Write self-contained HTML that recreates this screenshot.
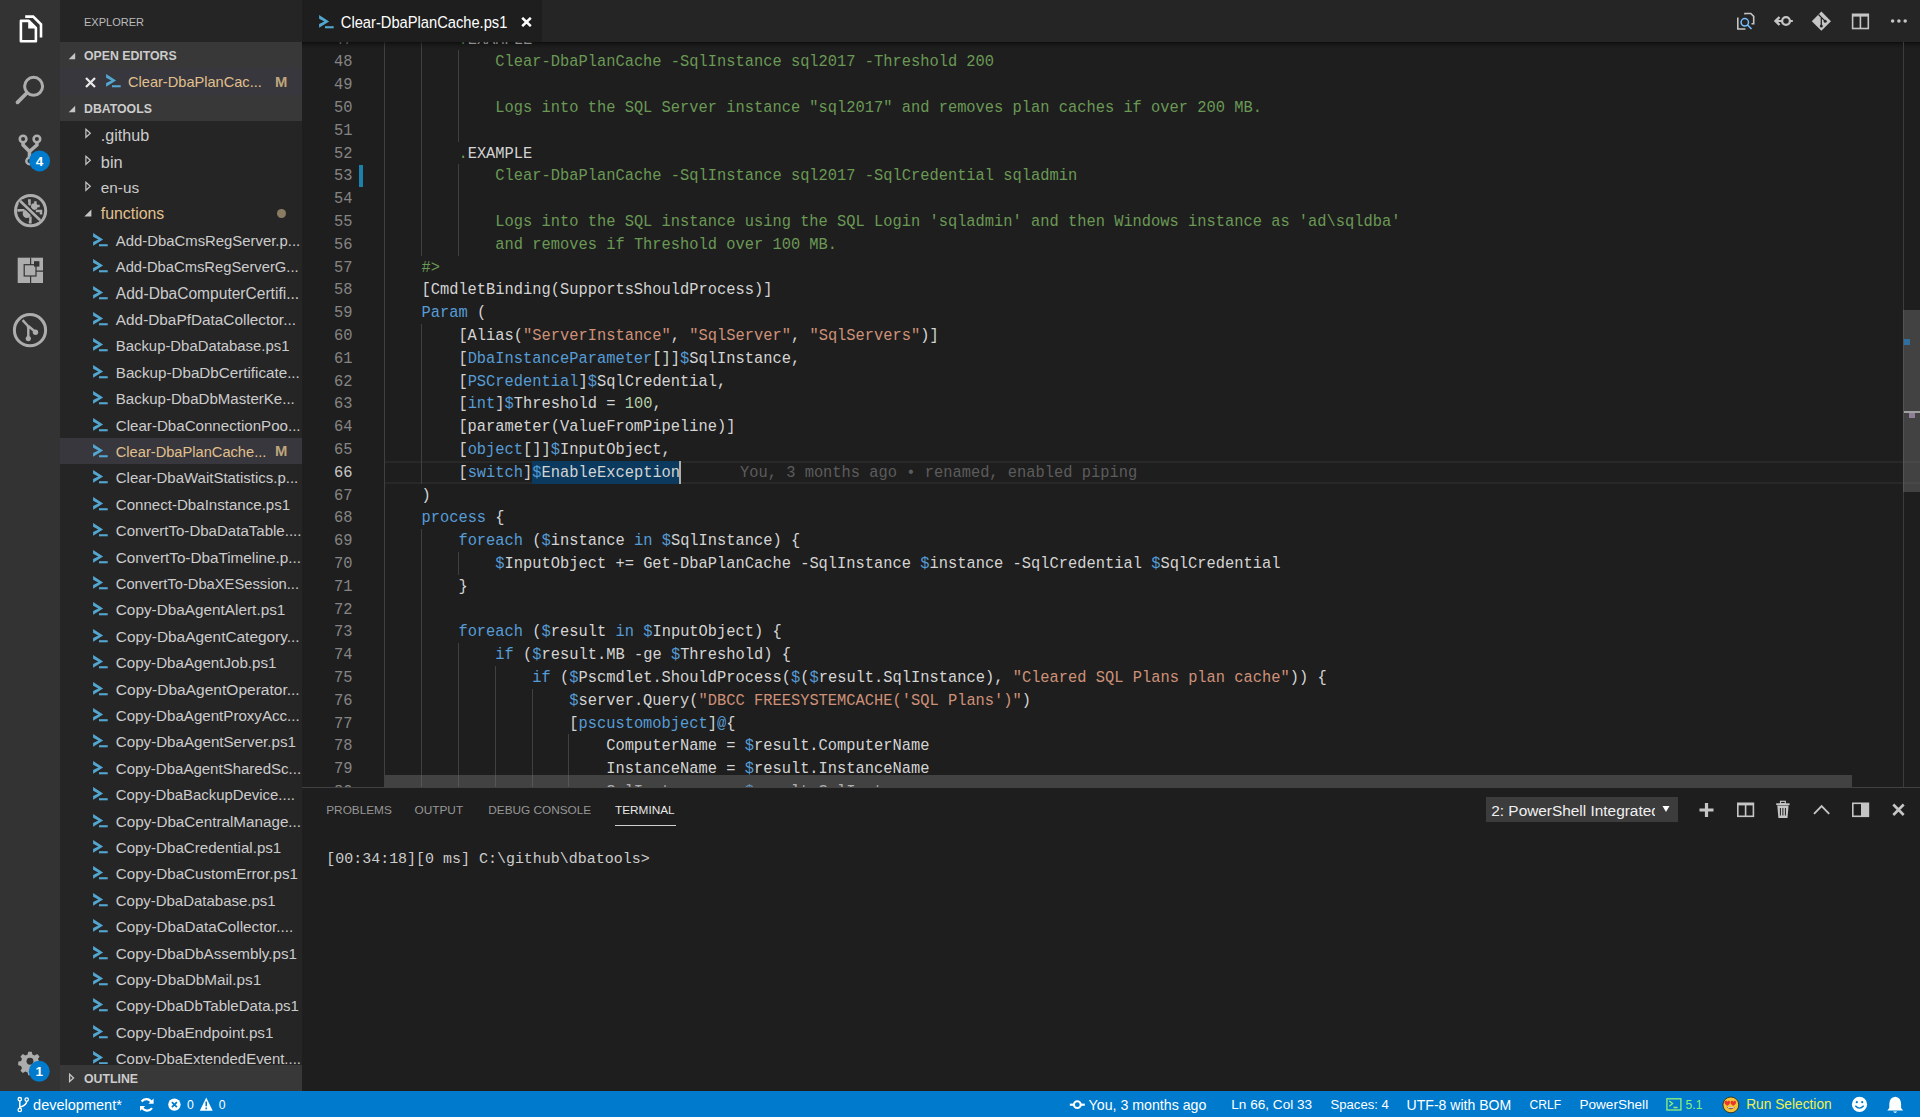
<!DOCTYPE html><html><head><meta charset="utf-8"><style>
*{margin:0;padding:0;box-sizing:border-box}
html,body{width:1920px;height:1117px;overflow:hidden;background:#1e1e1e;font-family:"Liberation Sans",sans-serif}
.abs{position:absolute}
#act{position:absolute;left:0;top:0;width:60px;height:1091px;background:#333333}
#side{position:absolute;left:60px;top:0;width:242px;height:1091px;background:#252526;overflow:hidden}
#tabs{position:absolute;left:302px;top:0;width:1618px;height:42px;background:#252526}
#editor{position:absolute;left:302px;top:42px;width:1618px;height:745px;background:#1e1e1e;overflow:hidden}
#panel{position:absolute;left:302px;top:787px;width:1618px;height:304px;background:#1e1e1e;border-top:1px solid #414141}
#status{position:absolute;left:0;top:1091px;width:1920px;height:26px;background:#007acc;color:#fff;font-size:13.8px}
.ln{position:absolute;left:82.50px;height:22.8px;line-height:22.8px;white-space:pre;font-family:"Liberation Mono",monospace;font-size:15.405px;color:#d4d4d4;transform:translateY(1px) scaleY(1.1)}
.lno{position:absolute;left:0;width:50.5px;text-align:right;height:22.8px;line-height:22.8px;font-family:"Liberation Mono",monospace;font-size:15.405px;color:#858585;transform:translateY(1px) scaleY(1.1)}
.lno.cur{color:#c6c6c6}
.ig{position:absolute;width:1.2px;height:23.3px;background:#404040}
.row{position:absolute;left:0;width:242px;height:26.4px}
.row.sel{background:#37373d}
.ft{position:absolute;top:0;line-height:26.4px;font-size:15.2px;color:#cccccc;white-space:nowrap;transform:translateY(1px)}
.ft.mod{color:#e2c08d}
.psi{position:absolute;left:33px;top:6px}
.chev{position:absolute;left:23.5px;top:7px}
.dot{position:absolute;left:216.5px;top:8.5px;width:9.5px;height:9.5px;border-radius:50%;background:#8c7b63}
.mbadge{position:absolute;left:215px;top:0.5px;line-height:26.4px;font-size:14.8px;font-weight:bold;color:#bfa57c}
.sh{position:absolute;left:0;width:242px;height:26.4px;background:#383838}
.sh span{position:absolute;left:24px;top:1px;line-height:26.4px;font-size:12.3px;font-weight:bold;color:#cccccc}
.sh svg{position:absolute;left:8px;top:9.8px}
</style></head><body>
<div id="act">
<svg class="abs" style="left:0;top:0" width="60" height="360" viewBox="0 0 60 360">
 <path d="M25.2 16.6 H33.2 L41 24.4 V37.5" fill="none" stroke="#fff" stroke-width="2.6"/>
 <path d="M20.9 20.9 H28.8 L35.9 28 V41.2 H20.9 Z" fill="none" stroke="#fff" stroke-width="2.6" stroke-linejoin="round"/>
 <path d="M28.2 21.5 V28.6 H35.3 Z" fill="#fff"/>
 <circle cx="33.6" cy="86.3" r="9" fill="none" stroke="#adadad" stroke-width="3"/>
 <path d="M26.8 93 L17.5 102.3" stroke="#adadad" stroke-width="3.8" stroke-linecap="round"/>
 <circle cx="23.1" cy="139.1" r="3.3" fill="none" stroke="#adadad" stroke-width="2.6"/>
 <circle cx="36.9" cy="139.1" r="3.3" fill="none" stroke="#adadad" stroke-width="2.6"/>
 <circle cx="29.5" cy="161" r="3.2" fill="none" stroke="#adadad" stroke-width="2.4"/>
 <path d="M23.1 142.3 V145 L29.5 151.5 V157.8 M36.9 142.3 V145 L29.5 151.5" fill="none" stroke="#adadad" stroke-width="3.6"/>
 <circle cx="39.6" cy="160.9" r="10.5" fill="#007acc"/>
 <text x="39.6" y="165.8" text-anchor="middle" font-family="Liberation Sans" font-size="13.5" font-weight="bold" fill="#fff">4</text>
 <circle cx="30.6" cy="210.7" r="15.1" fill="none" stroke="#adadad" stroke-width="3"/>
 <path d="M18.6 211.8 V210.3 H24.5 M30.4 216.5 V222.2 H28.8 M28 200.4 H29.5 V205.5 M35.4 201.2 V205.2 M36.5 205.9 H39.7 M35.8 211.1 H41 V214.6" fill="none" stroke="#adadad" stroke-width="2.5"/>
 <circle cx="26.9" cy="213.8" r="4.2" fill="#adadad"/>
 <circle cx="34.3" cy="206.6" r="3.3" fill="#adadad"/>
 <path d="M20.2 201 L40.2 220.3" stroke="#333" stroke-width="5.6"/>
 <path d="M20.2 201 L40.2 220.3" stroke="#adadad" stroke-width="2.6"/>
 <path d="M17.7 257.7 H43 V283 H17.7 Z" fill="#adadad"/>
 <path d="M30.6 257.7 V264.7 M30.6 276 V283 M36 271.2 H43" stroke="#333" stroke-width="1.2"/>
 <rect x="24.2" y="264.7" width="11.8" height="11.3" fill="none" stroke="#333" stroke-width="1.2"/>
 <rect x="34" y="261.2" width="5.4" height="5.4" fill="#333"/>
 <circle cx="30" cy="330.2" r="15.6" fill="none" stroke="#adadad" stroke-width="3"/>
 <path d="M22.6 320.1 L27.5 325.5 Q28.5 327 28.3 330 V338 M28.3 326 L35.5 332" fill="none" stroke="#adadad" stroke-width="2.4"/>
 <circle cx="28.3" cy="338.6" r="2.6" fill="#adadad"/>
 <circle cx="35.5" cy="332.3" r="2.7" fill="#adadad"/>
</svg>
<svg class="abs" style="left:0;top:1040px" width="60" height="51" viewBox="0 1040 60 51">
 <g transform="translate(30 1061.2) scale(0.86)">
  <path d="M-2 -11 h4 l0.8 3.3 l2.6 1.1 l2.9 -1.8 l2.8 2.8 l-1.8 2.9 l1.1 2.6 l3.3 0.8 v4 l-3.3 0.8 l-1.1 2.6 l1.8 2.9 l-2.8 2.8 l-2.9 -1.8 l-2.6 1.1 l-0.8 3.3 h-4 l-0.8 -3.3 l-2.6 -1.1 l-2.9 1.8 l-2.8 -2.8 l1.8 -2.9 l-1.1 -2.6 l-3.3 -0.8 v-4 l3.3 -0.8 l1.1 -2.6 l-1.8 -2.9 l2.8 -2.8 l2.9 1.8 l2.6 -1.1 Z" fill="#adadad"/>
  <circle r="4" fill="#333"/>
 </g>
 <circle cx="39.25" cy="1071.3" r="10.5" fill="#007acc"/>
 <text x="39.25" y="1076.2" text-anchor="middle" font-family="Liberation Sans" font-size="13.5" font-weight="bold" fill="#fff">1</text>
</svg>
</div>
<div id="side">
<div class="abs" style="left:24px;top:1px;line-height:42px;font-size:11px;color:#bbbbbb">EXPLORER</div>
<div class="sh" style="top:42px"><svg width="10" height="10" viewBox="0 0 10 10"><path d="M7.2 0.8 V7.3 H0.7 Z" fill="#c5c5c5"/></svg><span>OPEN EDITORS</span></div>
<div class="row sel" style="top:68.4px"><svg class="abs" style="left:25px;top:8.2px" width="11" height="11" viewBox="0 0 11 11"><path d="M1 1 L10 10 M10 1 L1 10" stroke="#e8e8e8" stroke-width="2.3"/></svg><svg class="psi" style="left:45.6px;top:6px" width="16" height="14" viewBox="0 0 16 14"><path d="M0.1 0.1 L10.1 6.5 L0.1 12.8 V9.1 L5.3 6.5 L0.1 3.8 Z" fill="#53a6d0"/><rect x="6" y="11.2" width="8.7" height="2.1" fill="#53a6d0"/></svg><span class="ft mod" style="left:68.00px;font-size:14.60px">Clear-DbaPlanCac...</span><span class="mbadge">M</span></div>
<div class="sh" style="top:94.8px"><svg width="10" height="10" viewBox="0 0 10 10"><path d="M7.2 0.8 V7.3 H0.7 Z" fill="#c5c5c5"/></svg><span>DBATOOLS</span></div>
<div class="abs" style="left:0;top:121.2px;width:242px;height:943px;overflow:hidden">
<div class="row" style="top:0.0px"><svg class="chev" width="10" height="12" viewBox="0 0 10 12"><path d="M1.9 1.3 L6.3 5.3 L1.9 9.3 Z" fill="none" stroke="#c5c5c5" stroke-width="1.2"/></svg><span class="ft" style="left:40.80px;font-size:16.10px">.github</span></div>
<div class="row" style="top:26.4px"><svg class="chev" width="10" height="12" viewBox="0 0 10 12"><path d="M1.9 1.3 L6.3 5.3 L1.9 9.3 Z" fill="none" stroke="#c5c5c5" stroke-width="1.2"/></svg><span class="ft" style="left:40.80px;font-size:16.39px">bin</span></div>
<div class="row" style="top:52.8px"><svg class="chev" width="10" height="12" viewBox="0 0 10 12"><path d="M1.9 1.3 L6.3 5.3 L1.9 9.3 Z" fill="none" stroke="#c5c5c5" stroke-width="1.2"/></svg><span class="ft" style="left:40.80px;font-size:15.32px">en-us</span></div>
<div class="row" style="top:79.2px"><svg class="chev" style="left:23.5px;top:8.6px" width="10" height="10" viewBox="0 0 10 10"><path d="M7.4 0.4 V7.5 H0.3 Z" fill="#c5c5c5"/></svg><span class="ft mod" style="left:40.80px;font-size:15.85px">functions</span><span class="dot"></span></div>
<div class="row" style="top:105.6px"><svg class="psi" width="16" height="14" viewBox="0 0 16 14"><path d="M0.1 0.1 L10.1 6.5 L0.1 12.8 V9.1 L5.3 6.5 L0.1 3.8 Z" fill="#53a6d0"/><rect x="6" y="11.2" width="8.7" height="2.1" fill="#53a6d0"/></svg><span class="ft" style="left:55.80px;font-size:14.89px">Add-DbaCmsRegServer.p...</span></div>
<div class="row" style="top:132.0px"><svg class="psi" width="16" height="14" viewBox="0 0 16 14"><path d="M0.1 0.1 L10.1 6.5 L0.1 12.8 V9.1 L5.3 6.5 L0.1 3.8 Z" fill="#53a6d0"/><rect x="6" y="11.2" width="8.7" height="2.1" fill="#53a6d0"/></svg><span class="ft" style="left:55.80px;font-size:14.75px">Add-DbaCmsRegServerG...</span></div>
<div class="row" style="top:158.4px"><svg class="psi" width="16" height="14" viewBox="0 0 16 14"><path d="M0.1 0.1 L10.1 6.5 L0.1 12.8 V9.1 L5.3 6.5 L0.1 3.8 Z" fill="#53a6d0"/><rect x="6" y="11.2" width="8.7" height="2.1" fill="#53a6d0"/></svg><span class="ft" style="left:55.80px;font-size:15.57px">Add-DbaComputerCertifi...</span></div>
<div class="row" style="top:184.8px"><svg class="psi" width="16" height="14" viewBox="0 0 16 14"><path d="M0.1 0.1 L10.1 6.5 L0.1 12.8 V9.1 L5.3 6.5 L0.1 3.8 Z" fill="#53a6d0"/><rect x="6" y="11.2" width="8.7" height="2.1" fill="#53a6d0"/></svg><span class="ft" style="left:55.80px;font-size:15.36px">Add-DbaPfDataCollector...</span></div>
<div class="row" style="top:211.2px"><svg class="psi" width="16" height="14" viewBox="0 0 16 14"><path d="M0.1 0.1 L10.1 6.5 L0.1 12.8 V9.1 L5.3 6.5 L0.1 3.8 Z" fill="#53a6d0"/><rect x="6" y="11.2" width="8.7" height="2.1" fill="#53a6d0"/></svg><span class="ft" style="left:55.80px;font-size:14.89px">Backup-DbaDatabase.ps1</span></div>
<div class="row" style="top:237.6px"><svg class="psi" width="16" height="14" viewBox="0 0 16 14"><path d="M0.1 0.1 L10.1 6.5 L0.1 12.8 V9.1 L5.3 6.5 L0.1 3.8 Z" fill="#53a6d0"/><rect x="6" y="11.2" width="8.7" height="2.1" fill="#53a6d0"/></svg><span class="ft" style="left:55.80px;font-size:15.19px">Backup-DbaDbCertificate...</span></div>
<div class="row" style="top:264.0px"><svg class="psi" width="16" height="14" viewBox="0 0 16 14"><path d="M0.1 0.1 L10.1 6.5 L0.1 12.8 V9.1 L5.3 6.5 L0.1 3.8 Z" fill="#53a6d0"/><rect x="6" y="11.2" width="8.7" height="2.1" fill="#53a6d0"/></svg><span class="ft" style="left:55.80px;font-size:15.06px">Backup-DbaDbMasterKe...</span></div>
<div class="row" style="top:290.4px"><svg class="psi" width="16" height="14" viewBox="0 0 16 14"><path d="M0.1 0.1 L10.1 6.5 L0.1 12.8 V9.1 L5.3 6.5 L0.1 3.8 Z" fill="#53a6d0"/><rect x="6" y="11.2" width="8.7" height="2.1" fill="#53a6d0"/></svg><span class="ft" style="left:55.80px;font-size:15.12px">Clear-DbaConnectionPoo...</span></div>
<div class="row sel" style="top:316.8px"><svg class="psi" width="16" height="14" viewBox="0 0 16 14"><path d="M0.1 0.1 L10.1 6.5 L0.1 12.8 V9.1 L5.3 6.5 L0.1 3.8 Z" fill="#53a6d0"/><rect x="6" y="11.2" width="8.7" height="2.1" fill="#53a6d0"/></svg><span class="ft mod" style="left:55.80px;font-size:14.65px">Clear-DbaPlanCache...</span><span class="mbadge">M</span></div>
<div class="row" style="top:343.2px"><svg class="psi" width="16" height="14" viewBox="0 0 16 14"><path d="M0.1 0.1 L10.1 6.5 L0.1 12.8 V9.1 L5.3 6.5 L0.1 3.8 Z" fill="#53a6d0"/><rect x="6" y="11.2" width="8.7" height="2.1" fill="#53a6d0"/></svg><span class="ft" style="left:55.80px;font-size:14.98px">Clear-DbaWaitStatistics.p...</span></div>
<div class="row" style="top:369.6px"><svg class="psi" width="16" height="14" viewBox="0 0 16 14"><path d="M0.1 0.1 L10.1 6.5 L0.1 12.8 V9.1 L5.3 6.5 L0.1 3.8 Z" fill="#53a6d0"/><rect x="6" y="11.2" width="8.7" height="2.1" fill="#53a6d0"/></svg><span class="ft" style="left:55.80px;font-size:15.08px">Connect-DbaInstance.ps1</span></div>
<div class="row" style="top:396.0px"><svg class="psi" width="16" height="14" viewBox="0 0 16 14"><path d="M0.1 0.1 L10.1 6.5 L0.1 12.8 V9.1 L5.3 6.5 L0.1 3.8 Z" fill="#53a6d0"/><rect x="6" y="11.2" width="8.7" height="2.1" fill="#53a6d0"/></svg><span class="ft" style="left:55.80px;font-size:15.05px">ConvertTo-DbaDataTable....</span></div>
<div class="row" style="top:422.4px"><svg class="psi" width="16" height="14" viewBox="0 0 16 14"><path d="M0.1 0.1 L10.1 6.5 L0.1 12.8 V9.1 L5.3 6.5 L0.1 3.8 Z" fill="#53a6d0"/><rect x="6" y="11.2" width="8.7" height="2.1" fill="#53a6d0"/></svg><span class="ft" style="left:55.80px;font-size:15.27px">ConvertTo-DbaTimeline.p...</span></div>
<div class="row" style="top:448.8px"><svg class="psi" width="16" height="14" viewBox="0 0 16 14"><path d="M0.1 0.1 L10.1 6.5 L0.1 12.8 V9.1 L5.3 6.5 L0.1 3.8 Z" fill="#53a6d0"/><rect x="6" y="11.2" width="8.7" height="2.1" fill="#53a6d0"/></svg><span class="ft" style="left:55.80px;font-size:14.72px">ConvertTo-DbaXESession...</span></div>
<div class="row" style="top:475.2px"><svg class="psi" width="16" height="14" viewBox="0 0 16 14"><path d="M0.1 0.1 L10.1 6.5 L0.1 12.8 V9.1 L5.3 6.5 L0.1 3.8 Z" fill="#53a6d0"/><rect x="6" y="11.2" width="8.7" height="2.1" fill="#53a6d0"/></svg><span class="ft" style="left:55.80px;font-size:15.33px">Copy-DbaAgentAlert.ps1</span></div>
<div class="row" style="top:501.6px"><svg class="psi" width="16" height="14" viewBox="0 0 16 14"><path d="M0.1 0.1 L10.1 6.5 L0.1 12.8 V9.1 L5.3 6.5 L0.1 3.8 Z" fill="#53a6d0"/><rect x="6" y="11.2" width="8.7" height="2.1" fill="#53a6d0"/></svg><span class="ft" style="left:55.80px;font-size:15.42px">Copy-DbaAgentCategory...</span></div>
<div class="row" style="top:528.0px"><svg class="psi" width="16" height="14" viewBox="0 0 16 14"><path d="M0.1 0.1 L10.1 6.5 L0.1 12.8 V9.1 L5.3 6.5 L0.1 3.8 Z" fill="#53a6d0"/><rect x="6" y="11.2" width="8.7" height="2.1" fill="#53a6d0"/></svg><span class="ft" style="left:55.80px;font-size:15.13px">Copy-DbaAgentJob.ps1</span></div>
<div class="row" style="top:554.4px"><svg class="psi" width="16" height="14" viewBox="0 0 16 14"><path d="M0.1 0.1 L10.1 6.5 L0.1 12.8 V9.1 L5.3 6.5 L0.1 3.8 Z" fill="#53a6d0"/><rect x="6" y="11.2" width="8.7" height="2.1" fill="#53a6d0"/></svg><span class="ft" style="left:55.80px;font-size:15.54px">Copy-DbaAgentOperator...</span></div>
<div class="row" style="top:580.8px"><svg class="psi" width="16" height="14" viewBox="0 0 16 14"><path d="M0.1 0.1 L10.1 6.5 L0.1 12.8 V9.1 L5.3 6.5 L0.1 3.8 Z" fill="#53a6d0"/><rect x="6" y="11.2" width="8.7" height="2.1" fill="#53a6d0"/></svg><span class="ft" style="left:55.80px;font-size:15.12px">Copy-DbaAgentProxyAcc...</span></div>
<div class="row" style="top:607.2px"><svg class="psi" width="16" height="14" viewBox="0 0 16 14"><path d="M0.1 0.1 L10.1 6.5 L0.1 12.8 V9.1 L5.3 6.5 L0.1 3.8 Z" fill="#53a6d0"/><rect x="6" y="11.2" width="8.7" height="2.1" fill="#53a6d0"/></svg><span class="ft" style="left:55.80px;font-size:15.15px">Copy-DbaAgentServer.ps1</span></div>
<div class="row" style="top:633.6px"><svg class="psi" width="16" height="14" viewBox="0 0 16 14"><path d="M0.1 0.1 L10.1 6.5 L0.1 12.8 V9.1 L5.3 6.5 L0.1 3.8 Z" fill="#53a6d0"/><rect x="6" y="11.2" width="8.7" height="2.1" fill="#53a6d0"/></svg><span class="ft" style="left:55.80px;font-size:15.02px">Copy-DbaAgentSharedSc...</span></div>
<div class="row" style="top:660.0px"><svg class="psi" width="16" height="14" viewBox="0 0 16 14"><path d="M0.1 0.1 L10.1 6.5 L0.1 12.8 V9.1 L5.3 6.5 L0.1 3.8 Z" fill="#53a6d0"/><rect x="6" y="11.2" width="8.7" height="2.1" fill="#53a6d0"/></svg><span class="ft" style="left:55.80px;font-size:14.93px">Copy-DbaBackupDevice....</span></div>
<div class="row" style="top:686.4px"><svg class="psi" width="16" height="14" viewBox="0 0 16 14"><path d="M0.1 0.1 L10.1 6.5 L0.1 12.8 V9.1 L5.3 6.5 L0.1 3.8 Z" fill="#53a6d0"/><rect x="6" y="11.2" width="8.7" height="2.1" fill="#53a6d0"/></svg><span class="ft" style="left:55.80px;font-size:15.23px">Copy-DbaCentralManage...</span></div>
<div class="row" style="top:712.8px"><svg class="psi" width="16" height="14" viewBox="0 0 16 14"><path d="M0.1 0.1 L10.1 6.5 L0.1 12.8 V9.1 L5.3 6.5 L0.1 3.8 Z" fill="#53a6d0"/><rect x="6" y="11.2" width="8.7" height="2.1" fill="#53a6d0"/></svg><span class="ft" style="left:55.80px;font-size:15.11px">Copy-DbaCredential.ps1</span></div>
<div class="row" style="top:739.2px"><svg class="psi" width="16" height="14" viewBox="0 0 16 14"><path d="M0.1 0.1 L10.1 6.5 L0.1 12.8 V9.1 L5.3 6.5 L0.1 3.8 Z" fill="#53a6d0"/><rect x="6" y="11.2" width="8.7" height="2.1" fill="#53a6d0"/></svg><span class="ft" style="left:55.80px;font-size:15.18px">Copy-DbaCustomError.ps1</span></div>
<div class="row" style="top:765.6px"><svg class="psi" width="16" height="14" viewBox="0 0 16 14"><path d="M0.1 0.1 L10.1 6.5 L0.1 12.8 V9.1 L5.3 6.5 L0.1 3.8 Z" fill="#53a6d0"/><rect x="6" y="11.2" width="8.7" height="2.1" fill="#53a6d0"/></svg><span class="ft" style="left:55.80px;font-size:14.98px">Copy-DbaDatabase.ps1</span></div>
<div class="row" style="top:792.0px"><svg class="psi" width="16" height="14" viewBox="0 0 16 14"><path d="M0.1 0.1 L10.1 6.5 L0.1 12.8 V9.1 L5.3 6.5 L0.1 3.8 Z" fill="#53a6d0"/><rect x="6" y="11.2" width="8.7" height="2.1" fill="#53a6d0"/></svg><span class="ft" style="left:55.80px;font-size:15.28px">Copy-DbaDataCollector....</span></div>
<div class="row" style="top:818.4px"><svg class="psi" width="16" height="14" viewBox="0 0 16 14"><path d="M0.1 0.1 L10.1 6.5 L0.1 12.8 V9.1 L5.3 6.5 L0.1 3.8 Z" fill="#53a6d0"/><rect x="6" y="11.2" width="8.7" height="2.1" fill="#53a6d0"/></svg><span class="ft" style="left:55.80px;font-size:15.20px">Copy-DbaDbAssembly.ps1</span></div>
<div class="row" style="top:844.8px"><svg class="psi" width="16" height="14" viewBox="0 0 16 14"><path d="M0.1 0.1 L10.1 6.5 L0.1 12.8 V9.1 L5.3 6.5 L0.1 3.8 Z" fill="#53a6d0"/><rect x="6" y="11.2" width="8.7" height="2.1" fill="#53a6d0"/></svg><span class="ft" style="left:55.80px;font-size:15.31px">Copy-DbaDbMail.ps1</span></div>
<div class="row" style="top:871.2px"><svg class="psi" width="16" height="14" viewBox="0 0 16 14"><path d="M0.1 0.1 L10.1 6.5 L0.1 12.8 V9.1 L5.3 6.5 L0.1 3.8 Z" fill="#53a6d0"/><rect x="6" y="11.2" width="8.7" height="2.1" fill="#53a6d0"/></svg><span class="ft" style="left:55.80px;font-size:15.05px">Copy-DbaDbTableData.ps1</span></div>
<div class="row" style="top:897.6px"><svg class="psi" width="16" height="14" viewBox="0 0 16 14"><path d="M0.1 0.1 L10.1 6.5 L0.1 12.8 V9.1 L5.3 6.5 L0.1 3.8 Z" fill="#53a6d0"/><rect x="6" y="11.2" width="8.7" height="2.1" fill="#53a6d0"/></svg><span class="ft" style="left:55.80px;font-size:15.25px">Copy-DbaEndpoint.ps1</span></div>
<div class="row" style="top:924.0px"><svg class="psi" width="16" height="14" viewBox="0 0 16 14"><path d="M0.1 0.1 L10.1 6.5 L0.1 12.8 V9.1 L5.3 6.5 L0.1 3.8 Z" fill="#53a6d0"/><rect x="6" y="11.2" width="8.7" height="2.1" fill="#53a6d0"/></svg><span class="ft" style="left:55.80px;font-size:14.94px">Copy-DbaExtendedEvent....</span></div>
</div>
<div class="sh" style="top:1064.6px"><svg style="left:7.5px;top:8.5px" width="10" height="12" viewBox="0 0 10 12"><path d="M1.6 1.2 L5.6 4.9 L1.6 8.6 Z" fill="none" stroke="#c5c5c5" stroke-width="1.3"/></svg><span>OUTLINE</span></div>
</div>
<div id="tabs"><div class="abs" style="left:0;top:0;width:240px;height:42px;background:#1e1e1e"></div>
<div class="abs" style="left:17px;top:15.2px"><svg  width="16" height="14" viewBox="0 0 16 14"><path d="M0.1 0.1 L10.1 6.5 L0.1 12.8 V9.1 L5.3 6.5 L0.1 3.8 Z" fill="#53a6d0"/><rect x="6" y="11.2" width="8.7" height="2.1" fill="#53a6d0"/></svg></div>
<div class="abs" style="left:38.8px;top:1.6px;line-height:42px;font-size:14.7px;color:#ffffff;white-space:nowrap;transform:scaleY(1.08)">Clear-DbaPlanCache.ps1</div>
<svg class="abs" style="left:218.5px;top:17px" width="11" height="10" viewBox="0 0 11 10"><path d="M1.2 0.8 L9.8 9.2 M9.8 0.8 L1.2 9.2" stroke="#fff" stroke-width="2.5"/></svg>
</div>

<svg class="abs" style="left:1720px;top:0" width="200" height="42" viewBox="1720 0 200 42">
 <path d="M1737.8 17.5 V29 H1745.5" fill="none" stroke="#c5c5c5" stroke-width="1.6"/>
 <path d="M1745 14.5 V13.5 H1750.8 L1753.7 16.4 V23.8 H1751.5" fill="none" stroke="#c5c5c5" stroke-width="1.6"/>
 <circle cx="1744.8" cy="22.3" r="3.7" fill="none" stroke="#75beff" stroke-width="1.5"/>
 <path d="M1747.5 25 L1751.5 29" stroke="#75beff" stroke-width="1.6"/>
 <path d="M1779.5 17 L1775.5 21 L1779.5 25" fill="none" stroke="#c5c5c5" stroke-width="2.4"/>
 <path d="M1776 21 H1792.8" stroke="#c5c5c5" stroke-width="2"/>
 <circle cx="1786" cy="21" r="3.9" fill="#252526" stroke="#c5c5c5" stroke-width="2.3"/>
 <path d="M1821.4 11.6 L1831 21.2 L1821.4 30.8 L1811.8 21.2 Z" fill="#c5c5c5"/>
 <path d="M1818.5 14.5 L1821.3 17.4 V25.8 M1821.3 17.4 L1825 21" fill="none" stroke="#252526" stroke-width="1.3"/>
 <circle cx="1821.3" cy="26" r="1.5" fill="#252526"/><circle cx="1825.2" cy="21.3" r="1.5" fill="#252526"/>
 <rect x="1852.6" y="14.3" width="15.7" height="14.2" fill="none" stroke="#c5c5c5" stroke-width="1.6"/>
 <rect x="1852.6" y="14" width="15.7" height="2.6" fill="#c5c5c5"/>
 <path d="M1860.4 16 V28.5" stroke="#c5c5c5" stroke-width="1.6"/>
 <circle cx="1892.6" cy="21" r="1.75" fill="#c5c5c5"/><circle cx="1898.9" cy="21" r="1.75" fill="#c5c5c5"/><circle cx="1905.2" cy="21" r="1.75" fill="#c5c5c5"/>
</svg>

<div id="editor">
<div class="abs" style="left:83px;top:418.80px;width:1535px;height:22.8px;border-top:2px solid #282828;border-bottom:2px solid #282828"></div>
<div class="abs" style="left:230.39px;top:418.80px;width:147.89px;height:22.8px;background:#0b3a5e"></div>
<div class="lno" style="top:-14.40px">47</div>
<div class="lno" style="top:8.40px">48</div>
<div class="lno" style="top:31.20px">49</div>
<div class="lno" style="top:54.00px">50</div>
<div class="lno" style="top:76.80px">51</div>
<div class="lno" style="top:99.60px">52</div>
<div class="lno" style="top:122.40px">53</div>
<div class="lno" style="top:145.20px">54</div>
<div class="lno" style="top:168.00px">55</div>
<div class="lno" style="top:190.80px">56</div>
<div class="lno" style="top:213.60px">57</div>
<div class="lno" style="top:236.40px">58</div>
<div class="lno" style="top:259.20px">59</div>
<div class="lno" style="top:282.00px">60</div>
<div class="lno" style="top:304.80px">61</div>
<div class="lno" style="top:327.60px">62</div>
<div class="lno" style="top:350.40px">63</div>
<div class="lno" style="top:373.20px">64</div>
<div class="lno" style="top:396.00px">65</div>
<div class="lno cur" style="top:418.80px">66</div>
<div class="lno" style="top:441.60px">67</div>
<div class="lno" style="top:464.40px">68</div>
<div class="lno" style="top:487.20px">69</div>
<div class="lno" style="top:510.00px">70</div>
<div class="lno" style="top:532.80px">71</div>
<div class="lno" style="top:555.60px">72</div>
<div class="lno" style="top:578.40px">73</div>
<div class="lno" style="top:601.20px">74</div>
<div class="lno" style="top:624.00px">75</div>
<div class="lno" style="top:646.80px">76</div>
<div class="lno" style="top:669.60px">77</div>
<div class="lno" style="top:692.40px">78</div>
<div class="lno" style="top:715.20px">79</div>
<div class="lno" style="top:738.00px">80</div>
<div class="abs" style="left:57px;top:122.90px;width:4px;height:22.30px;background:#1b81a8"></div>
<div class="ig" style="left:82.00px;top:-14.40px"></div>
<div class="ig" style="left:119.00px;top:-14.40px"></div>
<div class="ig" style="left:82.00px;top:8.40px"></div>
<div class="ig" style="left:119.00px;top:8.40px"></div>
<div class="ig" style="left:156.00px;top:8.40px"></div>
<div class="ig" style="left:82.00px;top:31.20px"></div>
<div class="ig" style="left:119.00px;top:31.20px"></div>
<div class="ig" style="left:156.00px;top:31.20px"></div>
<div class="ig" style="left:82.00px;top:54.00px"></div>
<div class="ig" style="left:119.00px;top:54.00px"></div>
<div class="ig" style="left:156.00px;top:54.00px"></div>
<div class="ig" style="left:82.00px;top:76.80px"></div>
<div class="ig" style="left:119.00px;top:76.80px"></div>
<div class="ig" style="left:156.00px;top:76.80px"></div>
<div class="ig" style="left:82.00px;top:99.60px"></div>
<div class="ig" style="left:119.00px;top:99.60px"></div>
<div class="ig" style="left:82.00px;top:122.40px"></div>
<div class="ig" style="left:119.00px;top:122.40px"></div>
<div class="ig" style="left:156.00px;top:122.40px"></div>
<div class="ig" style="left:82.00px;top:145.20px"></div>
<div class="ig" style="left:119.00px;top:145.20px"></div>
<div class="ig" style="left:156.00px;top:145.20px"></div>
<div class="ig" style="left:82.00px;top:168.00px"></div>
<div class="ig" style="left:119.00px;top:168.00px"></div>
<div class="ig" style="left:156.00px;top:168.00px"></div>
<div class="ig" style="left:82.00px;top:190.80px"></div>
<div class="ig" style="left:119.00px;top:190.80px"></div>
<div class="ig" style="left:156.00px;top:190.80px"></div>
<div class="ig" style="left:82.00px;top:213.60px"></div>
<div class="ig" style="left:82.00px;top:236.40px"></div>
<div class="ig" style="left:82.00px;top:259.20px"></div>
<div class="ig" style="left:82.00px;top:282.00px"></div>
<div class="ig" style="left:119.00px;top:282.00px"></div>
<div class="ig" style="left:82.00px;top:304.80px"></div>
<div class="ig" style="left:119.00px;top:304.80px"></div>
<div class="ig" style="left:82.00px;top:327.60px"></div>
<div class="ig" style="left:119.00px;top:327.60px"></div>
<div class="ig" style="left:82.00px;top:350.40px"></div>
<div class="ig" style="left:119.00px;top:350.40px"></div>
<div class="ig" style="left:82.00px;top:373.20px"></div>
<div class="ig" style="left:119.00px;top:373.20px"></div>
<div class="ig" style="left:82.00px;top:396.00px"></div>
<div class="ig" style="left:119.00px;top:396.00px"></div>
<div class="ig" style="left:82.00px;top:418.80px"></div>
<div class="ig" style="left:119.00px;top:418.80px"></div>
<div class="ig" style="left:82.00px;top:441.60px"></div>
<div class="ig" style="left:82.00px;top:464.40px"></div>
<div class="ig" style="left:82.00px;top:487.20px"></div>
<div class="ig" style="left:119.00px;top:487.20px"></div>
<div class="ig" style="left:82.00px;top:510.00px"></div>
<div class="ig" style="left:119.00px;top:510.00px"></div>
<div class="ig" style="left:156.00px;top:510.00px"></div>
<div class="ig" style="left:82.00px;top:532.80px"></div>
<div class="ig" style="left:119.00px;top:532.80px"></div>
<div class="ig" style="left:82.00px;top:555.60px"></div>
<div class="ig" style="left:119.00px;top:555.60px"></div>
<div class="ig" style="left:82.00px;top:578.40px"></div>
<div class="ig" style="left:119.00px;top:578.40px"></div>
<div class="ig" style="left:82.00px;top:601.20px"></div>
<div class="ig" style="left:119.00px;top:601.20px"></div>
<div class="ig" style="left:156.00px;top:601.20px"></div>
<div class="ig" style="left:82.00px;top:624.00px"></div>
<div class="ig" style="left:119.00px;top:624.00px"></div>
<div class="ig" style="left:156.00px;top:624.00px"></div>
<div class="ig" style="left:193.00px;top:624.00px"></div>
<div class="ig" style="left:82.00px;top:646.80px"></div>
<div class="ig" style="left:119.00px;top:646.80px"></div>
<div class="ig" style="left:156.00px;top:646.80px"></div>
<div class="ig" style="left:193.00px;top:646.80px"></div>
<div class="ig" style="left:230.00px;top:646.80px"></div>
<div class="ig" style="left:82.00px;top:669.60px"></div>
<div class="ig" style="left:119.00px;top:669.60px"></div>
<div class="ig" style="left:156.00px;top:669.60px"></div>
<div class="ig" style="left:193.00px;top:669.60px"></div>
<div class="ig" style="left:230.00px;top:669.60px"></div>
<div class="ig" style="left:82.00px;top:692.40px"></div>
<div class="ig" style="left:119.00px;top:692.40px"></div>
<div class="ig" style="left:156.00px;top:692.40px"></div>
<div class="ig" style="left:193.00px;top:692.40px"></div>
<div class="ig" style="left:230.00px;top:692.40px"></div>
<div class="ig" style="left:266.00px;top:692.40px"></div>
<div class="ig" style="left:82.00px;top:715.20px"></div>
<div class="ig" style="left:119.00px;top:715.20px"></div>
<div class="ig" style="left:156.00px;top:715.20px"></div>
<div class="ig" style="left:193.00px;top:715.20px"></div>
<div class="ig" style="left:230.00px;top:715.20px"></div>
<div class="ig" style="left:266.00px;top:715.20px"></div>
<div class="ig" style="left:82.00px;top:738.00px"></div>
<div class="ig" style="left:119.00px;top:738.00px"></div>
<div class="ig" style="left:156.00px;top:738.00px"></div>
<div class="ig" style="left:193.00px;top:738.00px"></div>
<div class="ig" style="left:230.00px;top:738.00px"></div>
<div class="ig" style="left:266.00px;top:738.00px"></div>
<div class="ln" style="top:-14.40px">        <span style="color:#6a9955">.</span>EXAMPLE</div>
<div class="ln" style="top:8.40px">            <span style="color:#6a9955">Clear-DbaPlanCache -SqlInstance sql2017 -Threshold 200</span></div>
<div class="ln" style="top:31.20px"></div>
<div class="ln" style="top:54.00px">            <span style="color:#6a9955">Logs into the SQL Server instance "sql2017" and removes plan caches if over 200 MB.</span></div>
<div class="ln" style="top:76.80px"></div>
<div class="ln" style="top:99.60px">        <span style="color:#6a9955">.</span>EXAMPLE</div>
<div class="ln" style="top:122.40px">            <span style="color:#6a9955">Clear-DbaPlanCache -SqlInstance sql2017 -SqlCredential sqladmin</span></div>
<div class="ln" style="top:145.20px"></div>
<div class="ln" style="top:168.00px">            <span style="color:#6a9955">Logs into the SQL instance using the SQL Login 'sqladmin' and then Windows instance as 'ad\sqldba'</span></div>
<div class="ln" style="top:190.80px">            <span style="color:#6a9955">and removes if Threshold over 100 MB.</span></div>
<div class="ln" style="top:213.60px">    <span style="color:#6a9955">#&gt;</span></div>
<div class="ln" style="top:236.40px">    [CmdletBinding(SupportsShouldProcess)]</div>
<div class="ln" style="top:259.20px">    <span style="color:#569cd6">Param</span> (</div>
<div class="ln" style="top:282.00px">        [Alias(<span style="color:#ce9178">"ServerInstance"</span>, <span style="color:#ce9178">"SqlServer"</span>, <span style="color:#ce9178">"SqlServers"</span>)]</div>
<div class="ln" style="top:304.80px">        [<span style="color:#569cd6">DbaInstanceParameter</span>[]]<span style="color:#569cd6">$</span>SqlInstance,</div>
<div class="ln" style="top:327.60px">        [<span style="color:#569cd6">PSCredential</span>]<span style="color:#569cd6">$</span>SqlCredential,</div>
<div class="ln" style="top:350.40px">        [<span style="color:#569cd6">int</span>]<span style="color:#569cd6">$</span>Threshold = <span style="color:#b5cea8">100</span>,</div>
<div class="ln" style="top:373.20px">        [parameter(ValueFromPipeline)]</div>
<div class="ln" style="top:396.00px">        [<span style="color:#569cd6">object</span>[]]<span style="color:#569cd6">$</span>InputObject,</div>
<div class="ln" style="top:418.80px">        [<span style="color:#569cd6">switch</span>]<span style="color:#569cd6">$</span>EnableException</div>
<div class="ln" style="top:441.60px">    )</div>
<div class="ln" style="top:464.40px">    <span style="color:#569cd6">process</span> {</div>
<div class="ln" style="top:487.20px">        <span style="color:#569cd6">foreach</span> (<span style="color:#569cd6">$</span>instance <span style="color:#569cd6">in</span> <span style="color:#569cd6">$</span>SqlInstance) {</div>
<div class="ln" style="top:510.00px">            <span style="color:#569cd6">$</span>InputObject += Get-DbaPlanCache -SqlInstance <span style="color:#569cd6">$</span>instance -SqlCredential <span style="color:#569cd6">$</span>SqlCredential</div>
<div class="ln" style="top:532.80px">        }</div>
<div class="ln" style="top:555.60px"></div>
<div class="ln" style="top:578.40px">        <span style="color:#569cd6">foreach</span> (<span style="color:#569cd6">$</span>result <span style="color:#569cd6">in</span> <span style="color:#569cd6">$</span>InputObject) {</div>
<div class="ln" style="top:601.20px">            <span style="color:#569cd6">if</span> (<span style="color:#569cd6">$</span>result.MB -ge <span style="color:#569cd6">$</span>Threshold) {</div>
<div class="ln" style="top:624.00px">                <span style="color:#569cd6">if</span> (<span style="color:#569cd6">$</span>Pscmdlet.ShouldProcess(<span style="color:#569cd6">$</span>(<span style="color:#569cd6">$</span>result.SqlInstance), <span style="color:#ce9178">"Cleared SQL Plans plan cache"</span>)) {</div>
<div class="ln" style="top:646.80px">                    <span style="color:#569cd6">$</span>server.Query(<span style="color:#ce9178">"DBCC FREESYSTEMCACHE('SQL Plans')"</span>)</div>
<div class="ln" style="top:669.60px">                    [<span style="color:#569cd6">pscustomobject</span>]<span style="color:#569cd6">@</span>{</div>
<div class="ln" style="top:692.40px">                        ComputerName = <span style="color:#569cd6">$</span>result.ComputerName</div>
<div class="ln" style="top:715.20px">                        InstanceName = <span style="color:#569cd6">$</span>result.InstanceName</div>
<div class="ln" style="top:738.00px">                        SqlInstance  = <span style="color:#569cd6">$</span>result.SqlInstance</div>
<div class="abs" style="left:377.08px;top:418.80px;width:2px;height:22.8px;background:#aeafad"></div>
<div class="ln" style="left:438px;top:418.80px;color:#5c5c5c">You, 3 months ago • renamed, enabled piping</div>
<div class="abs" style="left:0;top:0;width:1618px;height:6px;box-shadow:inset 0 6px 6px -6px #000"></div>
<div class="abs" style="left:83px;top:733.1px;width:1467px;height:12px;background:rgba(121,121,121,0.4)"></div>
<div class="abs" style="left:1601px;top:0;width:1.2px;height:746px;background:#3c3c3c"></div>
<div class="abs" style="left:1601px;top:268px;width:17px;height:181.8px;background:rgba(121,121,121,0.4)"></div>
<div class="abs" style="left:1602px;top:369px;width:16px;height:1.5px;background:#a0a0a0"></div>
<div class="abs" style="left:1607px;top:371px;width:6px;height:5px;background:#8e7e98"></div>
<div class="abs" style="left:1602px;top:297px;width:5.6px;height:6px;background:#2f6f9f"></div>
</div>
<div id="panel">
<div class="abs" style="left:24.25px;top:1px;line-height:42px;font-size:11.8px;color:#979797;white-space:nowrap">PROBLEMS</div>
<div class="abs" style="left:112.60px;top:1px;line-height:42px;font-size:11.8px;color:#979797;white-space:nowrap">OUTPUT</div>
<div class="abs" style="left:186.30px;top:1px;line-height:42px;font-size:11.8px;color:#979797;white-space:nowrap">DEBUG CONSOLE</div>
<div class="abs" style="left:313.00px;top:1px;line-height:42px;font-size:11.8px;color:#e7e7e7;white-space:nowrap">TERMINAL</div>
<div class="abs" style="left:313px;top:36.6px;width:61px;height:1px;background:#d0d0d0"></div>
<div class="abs" style="left:24.25px;top:59.5px;line-height:22px;font-family:'Liberation Mono',monospace;font-size:14.98px;color:#cccccc;white-space:pre">[00:34:18][0 ms] C:\github\dbatools&gt;</div>
<div class="abs" style="left:1184px;top:9px;width:191.5px;height:24.75px;background:#3c3c3c;overflow:hidden"><span class="abs" style="left:5.25px;top:1.5px;line-height:24.75px;font-size:15.4px;color:#f0f0f0;white-space:nowrap;width:164px;overflow:hidden">2: PowerShell Integrated</span><svg class="abs" style="left:176px;top:8px" width="8" height="8" viewBox="0 0 8 8"><path d="M0.5 1 H7.5 L4 7 Z" fill="#fff"/></svg></div>
</div>

<svg class="abs" style="left:1480px;top:788px" width="440" height="40" viewBox="1480 788 440 40">
 <path d="M1706.5 803 V817 M1699.5 810 H1713.5" stroke="#c5c5c5" stroke-width="3.2"/>
 <rect x="1737.8" y="803.3" width="15.6" height="13" fill="none" stroke="#c5c5c5" stroke-width="1.6"/>
 <rect x="1737.8" y="803" width="15.6" height="2.4" fill="#c5c5c5"/>
 <path d="M1745.6 804 V816" stroke="#c5c5c5" stroke-width="1.6"/>
 <path d="M1777.3 805.5 H1788.6 L1787.5 818 H1778.4 Z" fill="#c5c5c5"/>
 <rect x="1776.2" y="803.3" width="13.4" height="1.8" fill="#c5c5c5"/>
 <rect x="1780.5" y="801.3" width="4.8" height="2.4" fill="none" stroke="#c5c5c5" stroke-width="1.2"/>
 <path d="M1780.4 808 V815.5 M1782.9 808 V815.5 M1785.4 808 V815.5" stroke="#1e1e1e" stroke-width="1"/>
 <path d="M1814 813.8 L1821.6 806 L1829.2 813.8" fill="none" stroke="#c5c5c5" stroke-width="1.9"/>
 <rect x="1852.8" y="803.3" width="15.6" height="13" fill="none" stroke="#c5c5c5" stroke-width="1.6"/>
 <rect x="1861" y="803.3" width="7.4" height="13" fill="#c5c5c5"/>
 <path d="M1893.3 804.5 L1903.7 815 M1903.7 804.5 L1893.3 815" stroke="#c5c5c5" stroke-width="2.6"/>
</svg>

<div id="status"></div>

<svg class="abs" style="left:0;top:1091px" width="1920" height="26" viewBox="0 1091 1920 26">
 <circle cx="19.8" cy="1099.2" r="1.7" fill="none" stroke="#fff" stroke-width="1.3"/>
 <circle cx="19.8" cy="1109.9" r="1.7" fill="none" stroke="#fff" stroke-width="1.3"/>
 <circle cx="26.7" cy="1099.6" r="1.7" fill="none" stroke="#fff" stroke-width="1.3"/>
 <path d="M19.8 1101 V1108.2 M26.7 1101.3 Q26.7 1105 20.5 1107" fill="none" stroke="#fff" stroke-width="1.5"/>
 <path d="M151.5 1102 A6 6 0 0 0 141.6 1101.5 M142 1107.5 A6 6 0 0 0 152 1108.2" fill="none" stroke="#fff" stroke-width="2.2"/>
 <path d="M153.6 1098.6 V1103.8 H148.4 Z M140 1111.1 V1105.9 H145.2 Z" fill="#fff"/>
 <circle cx="174.4" cy="1104.6" r="6.2" fill="#fff"/>
 <path d="M171.9 1102.1 L176.9 1107.1 M176.9 1102.1 L171.9 1107.1" stroke="#007acc" stroke-width="1.7"/>
 <path d="M206.25 1097.5 L212.7 1110.8 H199.8 Z" fill="#fff"/>
 <path d="M206.25 1101.5 V1106.3 M206.25 1107.6 V1109.3" stroke="#007acc" stroke-width="1.6"/>
 <path d="M1069.8 1104.7 H1084.8" stroke="#fff" stroke-width="2.2"/>
 <circle cx="1077.3" cy="1104.7" r="3.4" fill="#007acc" stroke="#fff" stroke-width="2"/>
 <rect x="1666.9" y="1098.8" width="14" height="11.2" fill="none" stroke="#8df27c" stroke-width="1.3"/>
 <path d="M1669.3 1101 L1672.6 1103.6 L1669.3 1106.2 M1673.5 1107.5 H1677.5" fill="none" stroke="#8df27c" stroke-width="1.3"/>
 <circle cx="1730.85" cy="1104.9" r="7.9" fill="#f5c33b" stroke="#3a2a10" stroke-width="0.9"/>
 <path d="M1725.5 1102.5 c0-2 2.5-2.5 2.8-0.4 c0.3-2.1 2.8-1.6 2.8 0.4 c0 1.5-2.8 3.3-2.8 3.3 c0 0-2.8-1.8-2.8-3.3Z" fill="#e8372d" transform="translate(-1 0)"/>
 <path d="M1731.5 1102.5 c0-2 2.5-2.5 2.8-0.4 c0.3-2.1 2.8-1.6 2.8 0.4 c0 1.5-2.8 3.3-2.8 3.3 c0 0-2.8-1.8-2.8-3.3Z" fill="#e8372d" transform="translate(-1 0)"/>
 <path d="M1726.8 1107 Q1730.85 1111.5 1734.9 1107 Z" fill="#5a2a10"/>
 <path d="M1727.6 1107.3 H1734.1 L1733.6 1108.3 H1728.1 Z" fill="#fff"/>
 <circle cx="1859.5" cy="1104.4" r="7.6" fill="#fff"/>
 <circle cx="1856.8" cy="1102.2" r="1.1" fill="#007acc"/><circle cx="1862.2" cy="1102.2" r="1.1" fill="#007acc"/>
 <path d="M1855.3 1105.8 Q1859.5 1110.5 1863.7 1105.8" fill="none" stroke="#007acc" stroke-width="1.4"/>
 <path d="M1895.2 1096.8 Q1889.6 1097.3 1889.3 1104 V1108 L1887.3 1110.5 H1903.1 L1901.1 1108 V1104 Q1900.8 1097.3 1895.2 1096.8 Z" fill="#fff"/>
 <path d="M1893.2 1111.5 Q1895.2 1114.3 1897.2 1111.5 Z" fill="#fff"/>
</svg>

<div class="abs" style="left:33.10px;top:1092.3px;height:26px;line-height:26px;font-size:14.53px;color:#fff;white-space:nowrap;">development*</div>
<div class="abs" style="left:186.90px;top:1092.3px;height:26px;line-height:26px;font-size:12.23px;color:#fff;white-space:nowrap;">0</div>
<div class="abs" style="left:218.75px;top:1092.3px;height:26px;line-height:26px;font-size:12.23px;color:#fff;white-space:nowrap;">0</div>
<div class="abs" style="left:1088.60px;top:1092.3px;height:26px;line-height:26px;font-size:14.19px;color:#fff;white-space:nowrap;">You, 3 months ago</div>
<div class="abs" style="left:1231.30px;top:1092.3px;height:26px;line-height:26px;font-size:13.60px;color:#fff;white-space:nowrap;">Ln 66, Col 33</div>
<div class="abs" style="left:1330.60px;top:1092.3px;height:26px;line-height:26px;font-size:13.08px;color:#fff;white-space:nowrap;">Spaces: 4</div>
<div class="abs" style="left:1406.60px;top:1092.3px;height:26px;line-height:26px;font-size:14.05px;color:#fff;white-space:nowrap;">UTF-8 with BOM</div>
<div class="abs" style="left:1529.50px;top:1092.3px;height:26px;line-height:26px;font-size:12.11px;color:#fff;white-space:nowrap;">CRLF</div>
<div class="abs" style="left:1579.40px;top:1092.3px;height:26px;line-height:26px;font-size:13.60px;color:#fff;white-space:nowrap;">PowerShell</div>
<div class="abs" style="left:1685.50px;top:1092.3px;height:26px;line-height:26px;font-size:12.16px;color:#8df27c;white-space:nowrap;">5.1</div>
<div class="abs" style="left:1746.20px;top:1092.3px;height:26px;line-height:26px;font-size:13.74px;color:#f0f050;white-space:nowrap;">Run Selection</div>
</body></html>
